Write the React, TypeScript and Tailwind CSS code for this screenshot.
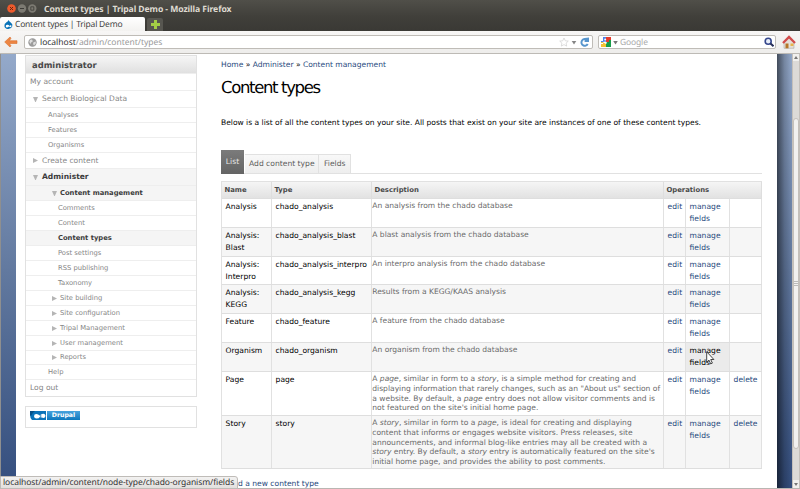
import React from 'react';

const Down = () => <svg className="h-[5px] w-[5px] shrink-0" viewBox="0 0 5 5"><path d="M0 0h5L2.8 5h-.6z" fill="#b5b5b5" /></svg>;
const Right = () => <svg className="h-[5px] w-[5px] shrink-0" viewBox="0 0 5 5"><path d="M0 0 5 2.5 0 5z" fill="#b5b5b5" /></svg>;

type Item = { t: string; h: string; pad: string; icon?: 'd' | 'r'; big?: boolean; on?: boolean };
const menu: Item[] = [
  { t: 'My account', h: 'h-[17px]', pad: 'pl-1', big: true },
  { t: 'Search Biological Data', h: 'h-[17px]', pad: 'pl-[7px]', icon: 'd', big: true },
  { t: 'Analyses', h: 'h-[15px]', pad: 'pl-[22px]' },
  { t: 'Features', h: 'h-[15px]', pad: 'pl-[22px]' },
  { t: 'Organisms', h: 'h-[15px]', pad: 'pl-[22px]' },
  { t: 'Create content', h: 'h-[16px]', pad: 'pl-[7px]', icon: 'r', big: true },
  { t: 'Administer', h: 'h-[17px]', pad: 'pl-[7px]', icon: 'd', big: true, on: true },
  { t: 'Content management', h: 'h-[15px]', pad: 'pl-[26px]', icon: 'd', on: true },
  { t: 'Comments', h: 'h-[15px]', pad: 'pl-[32px]' },
  { t: 'Content', h: 'h-[15px]', pad: 'pl-[32px]' },
  { t: 'Content types', h: 'h-[15px]', pad: 'pl-[32px]', on: true },
  { t: 'Post settings', h: 'h-[15px]', pad: 'pl-[32px]' },
  { t: 'RSS publishing', h: 'h-[15px]', pad: 'pl-[32px]' },
  { t: 'Taxonomy', h: 'h-[15px]', pad: 'pl-[32px]' },
  { t: 'Site building', h: 'h-[15px]', pad: 'pl-[26px]', icon: 'r' },
  { t: 'Site configuration', h: 'h-[15px]', pad: 'pl-[26px]', icon: 'r' },
  { t: 'Tripal Management', h: 'h-[15px]', pad: 'pl-[26px]', icon: 'r' },
  { t: 'User management', h: 'h-[15px]', pad: 'pl-[26px]', icon: 'r' },
  { t: 'Reports', h: 'h-[14px]', pad: 'pl-[26px]', icon: 'r' },
  { t: 'Help', h: 'h-[15px]', pad: 'pl-[22px]' },
  { t: 'Log out', h: 'h-[17px]', pad: 'pl-1', big: true },
];

function Sidebar() {
  return (
    <div className="ml-[9px] mt-[1px] w-[172px] shrink-0">
      <div className="border border-[#e1e1e1]">
        <div className="flex h-[17px] items-center bg-linear-to-b from-[#f6f6f6] to-[#e0e0e0] pt-px pl-[6px] text-[8.4px] font-bold text-[#494949]">administrator</div>
        {menu.map((m) => (
          <div key={m.t} className={`flex items-center border-t border-[#eeeeee] whitespace-nowrap ${m.h} ${m.pad} ${m.big ? 'gap-1 text-[7.55px]' : 'gap-[3px] text-[6.78px]'} ${m.on ? 'bg-[#f5f5f5] font-bold text-[#3c3c3c]' : 'text-[#868686]'}`}>
            {m.icon === 'd' && <Down />}
            {m.icon === 'r' && <Right />}
            <span>{m.t}</span>
          </div>
        ))}
      </div>
      <div className="mt-[9px] flex h-[22px] items-start border border-[#e1e1e1] pt-1 pl-1">
        <svg className="h-[9px] w-[16px]" viewBox="0 0 16 9">
          <path d="M0 0h16v9H2Q0 7 0 4z" fill="#0b73b9" />
          <path d="M0 0h5Q2 2 1 5L0 4z" fill="#064f86" />
          <path d="M4 5.2Q4 3 6.3 3T9.4 4.6L12 3q3-1 3.4 1.4T13.6 7L9.8 5.9Q9 7.4 6.6 7.4T4 5.2z" fill="#fff" />
          <circle cx="10.7" cy="5" r=".8" fill="#0b73b9" />
        </svg>
        <div className="ml-px flex h-[9px] w-[33px] items-center justify-center bg-linear-to-b from-[#45a2dd] to-[#0878bd] text-[6.2px] font-bold text-white">Drupal</div>
      </div>
    </div>
  );
}

const P = () => <i>page</i>;
const S = () => <i>story</i>;

type Row = { n: string[]; ty: string; d: React.ReactNode[]; h: string; del?: boolean; hot?: boolean };
const rows: Row[] = [
  { n: ['Analysis'], ty: 'chado_analysis', d: ['An analysis from the chado database'], h: 'h-[29px]' },
  { n: ['Analysis:', 'Blast'], ty: 'chado_analysis_blast', d: ['A blast analysis from the chado database'], h: 'h-[29px]' },
  { n: ['Analysis:', 'Interpro'], ty: 'chado_analysis_interpro', d: ['An interpro analysis from the chado database'], h: 'h-[28px]' },
  { n: ['Analysis:', 'KEGG'], ty: 'chado_analysis_kegg', d: ['Results from a KEGG/KAAS analysis'], h: 'h-[29px]' },
  { n: ['Feature'], ty: 'chado_feature', d: ['A feature from the chado database'], h: 'h-[29px]' },
  { n: ['Organism'], ty: 'chado_organism', d: ['An organism from the chado database'], h: 'h-[29px]', hot: true },
  {
    n: ['Page'], ty: 'page', h: 'h-[44px]', del: true,
    d: [
      <>A <P />, similar in form to a <S />, is a simple method for creating and</>,
      'displaying information that rarely changes, such as an "About us" section of',
      <>a website. By default, a <P /> entry does not allow visitor comments and is</>,
      "not featured on the site's initial home page.",
    ],
  },
  {
    n: ['Story'], ty: 'story', h: 'h-[53px]', del: true,
    d: [
      <>A <S />, similar in form to a <P />, is ideal for creating and displaying</>,
      'content that informs or engages website visitors. Press releases, site',
      'announcements, and informal blog-like entries may all be created with a',
      <><S /> entry. By default, a <S /> entry is automatically featured on the site's</>,
      'initial home page, and provides the ability to post comments.',
    ],
  },
];

function ContentTable() {
  const cell = 'border-r border-[#e1e1e1] pt-[2px] pl-[3.6px] leading-[12.1px]';
  return (
    <div className="mt-[7px] w-[541px] border-t border-l border-[#e1e1e1] text-[7.58px] whitespace-nowrap text-black">
      <div className="grid h-[17px] grid-cols-[50px_100px_292px_98px] items-stretch border-b border-[#dedede] bg-linear-to-b from-[#f5f5f5] to-[#e2e2e2] text-[6.85px] leading-[17px] font-bold text-[#494949]">
        {['Name', 'Type', 'Description', 'Operations'].map((h) => (
          <div key={h} className="border-r border-[#dedede] pl-[2.5px]">{h}</div>
        ))}
      </div>
      {rows.map((r, i) => (
        <div key={r.ty} className={`grid grid-cols-[50px_100px_292px_22px_44px_32px] border-b border-[#dedede] ${r.h} ${i % 2 ? 'bg-[#f6f6f6]' : 'bg-white'}`}>
          <div className={cell}>{r.n.map((l) => <div key={l}>{l}</div>)}</div>
          <div className={cell}>{r.ty}</div>
          <div className="border-r border-[#e1e1e1] pt-[2px] pl-[0.3px] text-[7.55px] leading-[9.8px] text-[#696969]">
            {r.d.map((l, k) => <div key={k}>{l}</div>)}
          </div>
          <div className={`${cell} text-[#27497d]`}>edit</div>
          <div className={`${cell} ${r.hot ? 'relative bg-[#ebebeb] text-black' : 'text-[#27497d]'}`}>
            <div>manage</div>
            <div>fields</div>
            {r.hot && (
              <svg className="absolute top-[8px] left-[20px] h-[14px] w-[9px]" viewBox="0 0 9 14">
                <path d="M.7.8v10.4l2.3-2.1 1.7 3.8 1.7-.8-1.7-3.6h3.2z" fill="#fff" stroke="#333" strokeWidth=".9" />
              </svg>
            )}
          </div>
          <div className={`${cell} text-[#27497d]`}>{r.del ? 'delete' : ''}</div>
        </div>
      ))}
    </div>
  );
}

function Main() {
  return (
    <div className="ml-[24px] w-[541px] shrink-0 whitespace-nowrap text-black">
      <div className="pt-[5px] text-[7.55px] leading-[12px]"><span className="text-[#27497d]">Home</span> » <span className="text-[#27497d]">Administer</span> » <span className="text-[#27497d]">Content management</span></div>
      <h1 className="mt-[5px] text-[16.5px] leading-[24px] tracking-[-1.35px]">Content types</h1>
      <p className="mt-[16px] text-[7.56px] leading-[14px]">Below is a list of all the content types on your site. All posts that exist on your site are instances of one of these content types.</p>
      <div className="mt-[20px] flex h-[24px] items-end border-b border-[#e1e1e1] text-[7.6px]">
        <div className="-mb-px flex h-[24px] w-[23px] items-center justify-center bg-linear-to-b from-[#7b7b7b] to-[#646464] text-[#e8e8e8]">List</div>
        <div className="ml-px flex h-[19px] w-[74px] items-center border-t border-r border-[#e1e1e1] bg-linear-to-b from-[#f8f8f8] to-[#eeeeee] pl-[4px] text-[#5d5d5d]">Add content type</div>
        <div className="flex h-[19px] w-[32px] items-center border-t border-r border-[#e1e1e1] bg-linear-to-b from-[#f8f8f8] to-[#eeeeee] pl-[5px] text-[#5d5d5d]">Fields</div>
      </div>
      <ContentTable />
      <div className="mt-[8px] ml-[17px] text-[7.58px] leading-[13px] text-[#27497d]">d a new content type</div>
    </div>
  );
}

function Chrome() {
  return (
    <div className="h-[54px] shrink-0 bg-[#3c3b37] font-['Noto_Sans','Open_Sans',sans-serif] whitespace-nowrap">
      <div className="flex h-[17px] items-center bg-linear-to-b from-[#504f49] to-[#403f3a] pl-[7px]">
        <svg className="h-[9px] w-[30px]" viewBox="0 0 30 9">
          <circle cx="4.5" cy="4.5" r="4.3" fill="#ee5a2c" />
          <path d="m3 3 3 3m0-3L3 6" stroke="#682811" />
          <circle cx="15" cy="4.5" r="4.2" fill="#7c7a72" />
          <path d="M13 4.5h4" stroke="#3c3b37" />
          <circle cx="25.3" cy="4.5" r="4.2" fill="#7c7a72" />
          <path d="M23.8 2.8h3v3.4h-3z" fill="none" stroke="#3c3b37" strokeWidth=".8" />
        </svg>
        <span className="ml-[7px] text-[8.6px] leading-[16px] font-bold tracking-[-0.07px] text-[#dfdbd2]">Content types | Tripal Demo - Mozilla Firefox</span>
      </div>
      <div className="flex h-[14px] items-end bg-linear-to-b from-[#403f3a] to-[#3a3935]">
        <div className="flex h-[14px] w-[145px] items-center rounded-t-[2px] bg-linear-to-b from-white to-[#f3f2f0] pl-[4px]">
          <svg className="h-[9px] w-[9px]" viewBox="0 0 9 9">
            <path d="M4.6 0Q5 1.4 6.7 2.4 9 4 8.3 6.2 7.3 9 4.4 9 1 9 .4 6.2 0 3.8 2.5 2.3 4.3 1.4 4.6 0z" fill="#0872b8" />
            <path d="M1.8 6Q2 4.7 3.5 4.8T5.2 6Q6.4 4.8 7.3 5.5T6.7 7.2L5 6.6Q4 7.6 2.8 7.4T1.8 6z" fill="#fff" />
          </svg>
          <span className="ml-[2px] pt-px text-[8.5px] leading-[14px] tracking-[-0.22px] text-[#444]">Content types | Tripal Demo</span>
        </div>
        <div className="ml-[2px] flex h-[13px] w-[16px] items-center justify-center rounded-t-[2px] bg-[#575650]">
          <svg className="h-[9px] w-[9px]" viewBox="0 0 9 9"><path d="M3 0h3v3h3v3H6v3H3V6H0V3h3z" fill="#a4ce45" /></svg>
        </div>
      </div>
      <div className="flex h-[23px] items-center border-b border-[#bdbab5] bg-linear-to-b from-[#f7f6f5] to-[#eeedeb] text-[8.5px]">
        <svg className="ml-[4px] h-[12px] w-[14px]" viewBox="0 0 14 12"><path d="M.7 6 6 1l1 1.2-1.6 2.5H13v2.8H5.4L7 9.8 6 11z" fill="#ed8542" stroke="#d9702f" strokeWidth=".6" /></svg>
        <div className="ml-[6px] flex h-[14px] w-[569px] items-center rounded-[2px] border border-[#bfbcb7] bg-white pl-[3px] text-[#999]">
          <svg className="h-[9px] w-[9px]" viewBox="0 0 9 9"><circle cx="4.5" cy="4.5" r="4.2" fill="#9c9c9c" /><path d="M2 2q2-1 2.6.4T3.3 4.3L2.6 6 1.3 4zM5.5 4.3l2.3-.8v2L6 7.5 5 6z" fill="#ddd" /></svg>
          <span className="ml-[3px] pt-px text-[8.5px] leading-[12px] tracking-[-0.02px]"><span className="text-[#333]">localhost</span>/admin/content/types</span>
          <svg className="ml-auto h-[10px] w-[32px]" viewBox="0 0 32 10">
            <path d="m6 1 1.3 2.8 3 .3-2.2 2 .6 3L6 7.6 3.3 9.1l.6-3-2.2-2 3-.3z" fill="#fff" stroke="#cfcfcf" strokeWidth=".7" />
            <path d="M13.7 4h4.6L16 7.4z" fill="#858585" />
            <path d="M28.3 2.5A3.3 3.3 0 1 0 29.7 7" fill="none" stroke="#5795cd" strokeWidth="2" /><path d="M26.6 5V1L31 .6V5z" fill="#5795cd" />
          </svg>
          <span className="w-[2px]" />
        </div>
        <div className="ml-[5px] flex h-[14px] w-[178px] items-center rounded-[2px] border border-[#bfbcb7] bg-white pl-[2px]">
          <svg className="h-[10px] w-[18px]" viewBox="0 0 18 10">
            <path d="M0 0h5v5H0z" fill="#4d80ea" /><path d="M5 0h5v5H5z" fill="#e43c2d" /><path d="M0 5h5v5H0z" fill="#f6c334" /><path d="M5 5h5v5H5zM8 3h2v3H8z" fill="#199c4a" />
            <path d="M0 0h2v4H0zM0 6h2v1H0z" fill="#fff" /><circle cx="4.2" cy="2.6" r="1" fill="#fff" /><path d="M1.5 5.1q3-1.2 4 0T5 7z" fill="#fff" />
            <path d="M12.2 4h4.6l-2.3 3.4z" fill="#777" />
          </svg>
          <span className="ml-[1px] pt-px leading-[12px] tracking-[-0.15px] text-[#aaa]">Google</span>
          <svg className="mr-[1px] ml-auto h-[10px] w-[10px]" viewBox="0 0 10 10"><circle cx="4.2" cy="4.2" r="3" fill="#e8eef9" stroke="#35478c" strokeWidth="1.6" /><path d="m6.5 6.5 3 2.7" stroke="#262f59" strokeWidth="2" /></svg>
        </div>
        <svg className="ml-[6px] h-[14px] w-[14px]" viewBox="0 0 14 14">
          <path d="M2 7 7 2l5 5v6.3H2z" fill="#e5dfd8" stroke="#888" strokeWidth=".4" />
          <path d="M3.5 8.5h3v4.8h-3z" fill="#b57627" /><path d="M8.5 8.5h3V11h-3z" fill="#e6b34c" />
          <path d="m1 8 6-6 6 6" fill="none" stroke="#d14b4b" strokeWidth="2.3" />
        </svg>
      </div>
    </div>
  );
}

export default function App() {
  return (
    <div className="relative flex h-[489px] w-[800px] flex-col overflow-hidden bg-white font-['DejaVu_Sans',sans-serif] [text-rendering:geometricPrecision]">
      <Chrome />
      <div className="flex min-h-0 flex-1 border-b border-[#b9b6b2]">
        <div className="w-[16px] shrink-0 border-l border-[#8f8f8f] bg-linear-to-b from-[#94a9ca] via-[#62799f] to-[#344e7e]" />
        <div className="flex w-[761px] shrink-0 overflow-hidden bg-white"><Sidebar /><Main /></div>
        <div className="w-[15px] shrink-0 bg-linear-to-b from-[#94a9ca] via-[#62799f] to-[#344e7e]">
          <div className="h-full bg-linear-to-r from-black/55 via-black/20 to-transparent" />
        </div>
        <div className="flex w-[8px] shrink-0 flex-col border-x border-[#c4c0bb] bg-[#dcdad7]">
          <div className="flex h-[7px] items-center justify-center bg-[#f1f0ee]"><svg className="h-[3px] w-[4px]" viewBox="0 0 4 3"><path d="M0 3 2 0l2 3z" fill="#777" /></svg></div>
          <div className="mt-[57px] flex h-[331px] flex-col items-center justify-center gap-px rounded-[3px] border border-[#c4c0bb] bg-[#f2f1f0]">
            <div className="h-px w-[4px] bg-[#bbb]" /><div className="h-px w-[4px] bg-[#bbb]" /><div className="h-px w-[4px] bg-[#bbb]" />
          </div>
          <div className="mt-auto flex h-[8px] items-center justify-center bg-[#f1f0ee]"><svg className="h-[3px] w-[4px]" viewBox="0 0 4 3"><path d="m0 0 2 3 2-3z" fill="#777" /></svg></div>
        </div>
      </div>
      <div className="absolute bottom-0 left-0 flex h-[13px] w-[238px] items-center rounded-tr-[3px] border border-[#bfbcb8] bg-linear-to-b from-[#f3f2f1] to-[#e2e0de] pl-[2px] font-['Noto_Sans','Open_Sans',sans-serif] text-[8.5px] leading-[11px] tracking-[-0.07px] whitespace-nowrap text-[#333]">localhost/admin/content/node-type/chado-organism/fields</div>
    </div>
  );
}
